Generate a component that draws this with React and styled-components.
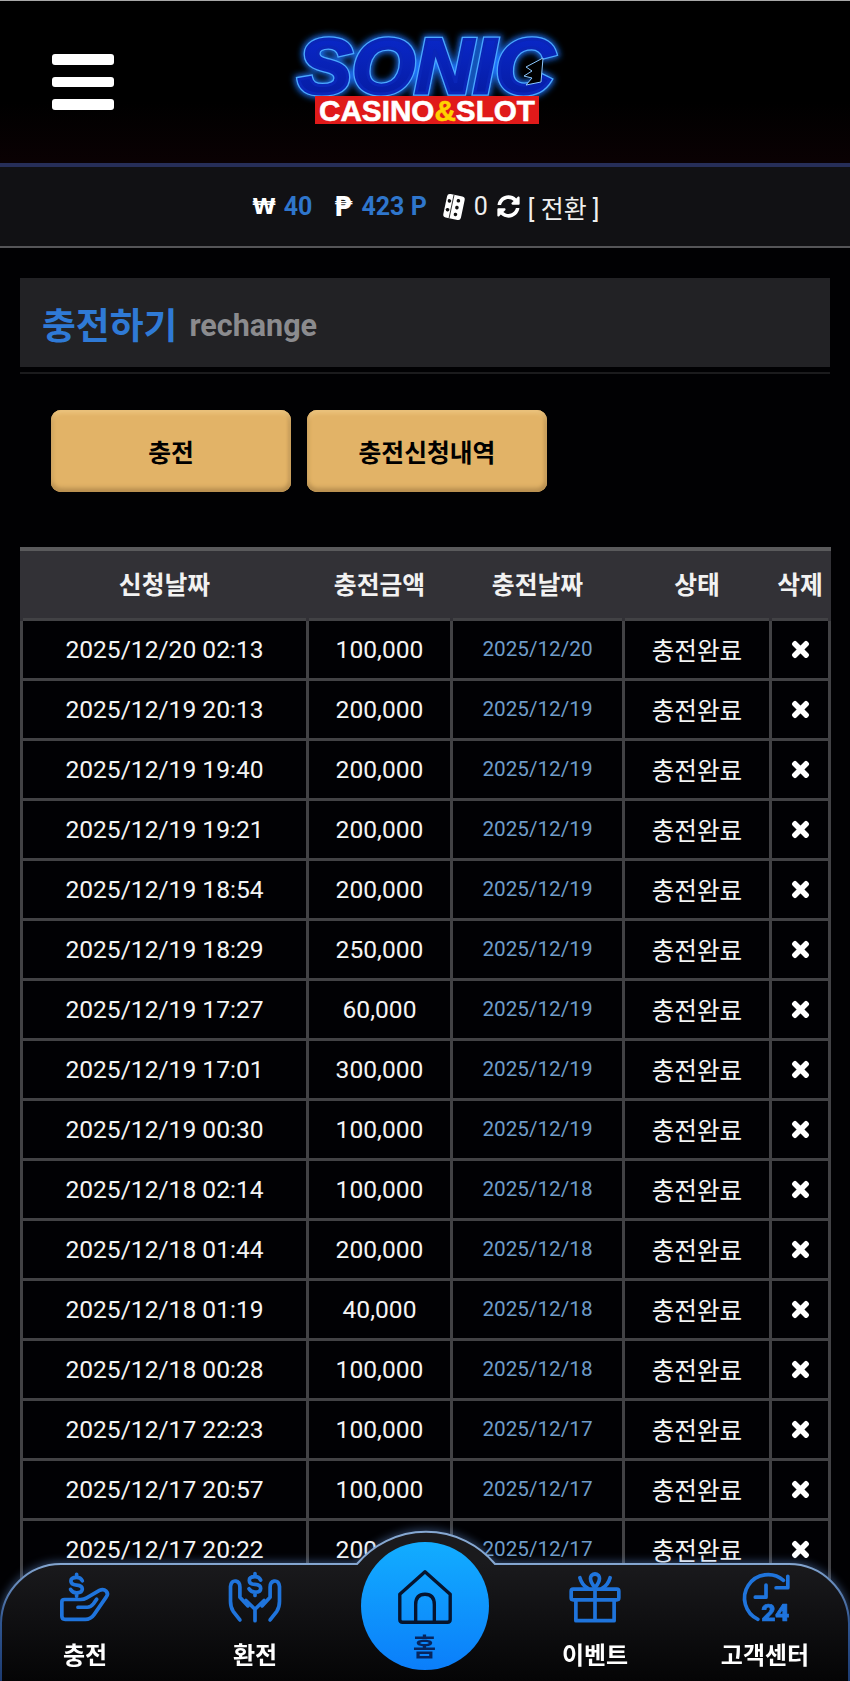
import React from "react";
import styled, { createGlobalStyle } from "styled-components";
import { FaSyncAlt, FaTimes } from "react-icons/fa";

const FONT = `Roboto, "Noto Sans CJK KR", sans-serif`;

const Global = createGlobalStyle`
  html, body { margin: 0; padding: 0; background: #000; overflow: hidden; height: 1681px; }
  body { font-family: ${FONT}; color: #fff; }
  * { box-sizing: border-box; }
`;

const Page = styled.div`
  width: 850px;
  height: 1681px;
  overflow: hidden;
  background: #010103;
`;

const Header = styled.header`
  height: 167px;
  border-top: 1px solid #a8a8a8;
  border-bottom: 4px solid #262e58;
  background: linear-gradient(#000 62%, #0a0103);
  display: grid;
  grid-template-columns: 1fr auto 1fr;
  padding-top: 24px;
`;

const Burger = styled.button`
  all: unset;
  align-self: start;
  margin: 29px 0 0 52px;
  width: 62px;
  display: flex;
  flex-direction: column;
  gap: 12px;
`;

const BurgerBar = styled.span`
  display: block;
  height: 10.5px;
  border-radius: 3px;
  background: #fff;
`;

const LogoSvg = styled.svg`
  display: block;
  width: 284px;
  height: 105px;
  margin-left: 4px;
  overflow: visible;
`;

const Balance = styled.div`
  height: 81px;
  background: #111114;
  border-bottom: 2px solid #555558;
  display: flex;
  align-items: center;
  justify-content: center;
  font-size: 25px;
  padding-left: 2px;
`;

const Sym = styled.span`
  font-family: "DejaVu Sans", sans-serif;
  font-weight: 700;
  font-size: ${(p) => p.$size || 24}px;
  color: #fff;
  margin-right: ${(p) => p.$gap || 9}px;
`;

const Amount = styled.span`
  font-weight: 700;
  color: #2f76cc;
  margin-right: ${(p) => p.$gap || 22}px;
`;

const Plain = styled.span`
  color: #eee;
  margin-right: ${(p) => p.$gap || 0}px;
`;

const Dice = styled.svg`
  width: 24px;
  height: 28px;
  margin-right: 8px;
`;

const Refresh = styled(FaSyncAlt)`
  width: 23px;
  height: 23px;
  margin: 0 8px 0 9px;
  color: #fff;
`;

const Main = styled.main`
  padding: 30px 20px 0;
`;

const TitleWrap = styled.div`
  padding-bottom: 5px;
  border-bottom: 2px solid #1b1b1d;
`;

const Title = styled.div`
  height: 89px;
  background: #222225;
  display: flex;
  align-items: center;
  gap: 12px;
  padding-left: 22px;
`;

const TitleKo = styled.h1`
  margin: 0;
  font-size: 36.8px;
  font-weight: 700;
  color: #2f7ad6;
`;

const TitleEn = styled.span`
  font-size: 30.5px;
  font-weight: 700;
  color: #8b8b8e;
  margin-top: 5px;
`;

const Tabs = styled.div`
  display: flex;
  gap: 16px;
  padding: 36px 0 55px 31px;
`;

const Tab = styled.button`
  width: 240px;
  height: 82px;
  border: 0;
  border-radius: 10px;
  background: #e2b367;
  box-shadow: inset 0 -4px 4px #b88f50, inset 0 3px 4px #edc680, inset 3px 0 3px #d9ab62, inset -3px 0 3px #c59a58;
  color: #000;
  font-family: ${FONT};
  font-size: 24.8px;
  font-weight: 700;
`;

const Table = styled.table`
  width: 808px;
  border-collapse: collapse;
  table-layout: fixed;
`;

const Th = styled.th`
  height: 70px;
  width: ${(p) => p.$w}px;
  padding: 0 0 2px;
  background: #323136;
  border-top: 4px solid #5a5a5c;
  border-left: 3px solid #323136;
  border-right: 3px solid #323136;
  font-size: 24.8px;
  font-weight: 700;
  color: #f2f2f2;
  white-space: nowrap;
`;

const Td = styled.td`
  height: 60px;
  padding: 0;
  text-align: center;
  border: 3px solid #424245;
  background: #010104;
  font-size: ${(p) => (p.$accent ? 20.7 : 24.6)}px;
  color: ${(p) => (p.$accent ? "#6e9cc9" : "#f4f4f4")};
  white-space: nowrap;
`;

const DeleteIcon = styled(FaTimes)`
  width: 19px;
  height: 23px;
  color: #fff;
  display: block;
  margin: 0 auto;
  stroke: #fff;
  stroke-width: 28;
`;

const Nav = styled.nav`
  position: fixed;
  left: 0;
  bottom: 0;
  width: 850px;
  height: 150px;
  display: grid;
  grid-template-columns: repeat(5, 170px);
  align-items: start;
`;

const NavShape = styled.svg`
  position: absolute;
  inset: 0;
  width: 850px;
  height: 150px;
  overflow: visible;
  filter: drop-shadow(0 -1px 5px rgba(110, 160, 230, 0.45));
`;

const NavItem = styled.a`
  position: relative;
  display: flex;
  flex-direction: column;
  align-items: center;
  padding-top: 40px;
  font-size: 24px;
  font-weight: 700;
  color: #fff;
`;

const NavIcon = styled.svg`
  display: block;
  width: 54px;
  height: 52px;
  margin-bottom: 15px;
  fill: none;
  stroke: #1f74dc;
  stroke-width: 11;
  stroke-linecap: round;
  stroke-linejoin: round;
`;

const NavLabel = styled.span`
  line-height: 36px;
  white-space: nowrap;
`;

const HomeButton = styled.a`
  position: relative;
  justify-self: center;
  margin: 11px 0 0 -1px;
  width: 128px;
  height: 128px;
  border-radius: 50%;
  background: linear-gradient(#12adff, #0b7efa);
  display: flex;
  flex-direction: column;
  align-items: center;
  padding-top: 27px;
  color: #07255e;
  font-size: 25px;
  font-weight: 700;
`;

const HomeIcon = styled.svg`
  display: block;
  width: 56px;
  height: 56px;
  fill: none;
  stroke: #06142e;
  stroke-width: 3.6;
  stroke-linejoin: round;
  stroke-linecap: round;
`;

const HomeLabel = styled.span`
  line-height: 30px;
  margin-top: 8px;
`;

const dates = [
  ["2025/12/20 02:13", "100,000", "2025/12/20"],
  ["2025/12/19 20:13", "200,000", "2025/12/19"],
  ["2025/12/19 19:40", "200,000", "2025/12/19"],
  ["2025/12/19 19:21", "200,000", "2025/12/19"],
  ["2025/12/19 18:54", "200,000", "2025/12/19"],
  ["2025/12/19 18:29", "250,000", "2025/12/19"],
  ["2025/12/19 17:27", "60,000", "2025/12/19"],
  ["2025/12/19 17:01", "300,000", "2025/12/19"],
  ["2025/12/19 00:30", "100,000", "2025/12/19"],
  ["2025/12/18 02:14", "100,000", "2025/12/18"],
  ["2025/12/18 01:44", "200,000", "2025/12/18"],
  ["2025/12/18 01:19", "40,000", "2025/12/18"],
  ["2025/12/18 00:28", "100,000", "2025/12/18"],
  ["2025/12/17 22:23", "100,000", "2025/12/17"],
  ["2025/12/17 20:57", "100,000", "2025/12/17"],
  ["2025/12/17 20:22", "200,000", "2025/12/17"],
];

const sonicText = {
  x: 13,
  y: 68,
  fontFamily: "Liberation Sans",
  fontWeight: 700,
  fontStyle: "italic",
  fontSize: 78,
  textLength: 256,
  lengthAdjust: "spacingAndGlyphs",
};

const Logo = () => (
  <LogoSvg viewBox="0 0 284 105">
    <defs>
      <filter id="glow" x="-10%" y="-20%" width="120%" height="140%">
        <feGaussianBlur stdDeviation="3" />
      </filter>
      <linearGradient id="blueFill" x1="0" y1="0" x2="0" y2="1">
        <stop offset="0" stopColor="#0a2ad0" />
        <stop offset="1" stopColor="#051a9c" />
      </linearGradient>
    </defs>
    <text {...sonicText} fill="none" stroke="#1a74ff" strokeWidth="8" filter="url(#glow)">SONIC</text>
    <text {...sonicText} fill="none" stroke="#4aa8ff" strokeWidth="5.5">SONIC</text>
    <text {...sonicText} fill="url(#blueFill)" stroke="#0a26b8" strokeWidth="3">SONIC</text>
    <path d="M258 33 L241 42 L247 46 L239 51 L247 53 L241 60 L256 57 Z" fill="#000" stroke="#8cc8ff" strokeWidth="1" />
    <rect x="30" y="71" width="224" height="28" fill="#e01a1a" />
    <text x="34" y="96" fontFamily="Liberation Sans Narrow, Liberation Sans" fontWeight="700" fontSize="30" textLength="216" lengthAdjust="spacingAndGlyphs" fill="#fff" stroke="#fff" strokeWidth="0.6">CASINO<tspan fill="#ffd200" stroke="#ffd200">&amp;</tspan>SLOT</text>
  </LogoSvg>
);

const Dollar = ({ x, y }) => (
  <path
    transform={`translate(${x} ${y})`}
    d="M17 -13 Q12 -23 0 -23 Q-17 -23 -17 -12 Q-17 -1 0 0 Q17 1 17 12 Q17 23 0 23 Q-12 23 -18 13 M0 -32 V-23 M0 23 V33"
  />
);

const items = {
  charge: (
    <NavIcon viewBox="25 20 160 155">
      <Dollar x={80} y={62} />
      <path d="M36 112 Q36 105 44 105 H92 Q102 105 110 100 L148 78 Q160 72 168 80 Q176 88 168 98 L132 150 Q122 164 106 164 H46 Q36 164 36 154 Z" />
      <path d="M84 128 H112 Q122 128 130 118 L140 104" />
    </NavIcon>
  ),
  exchange: (
    <NavIcon viewBox="537 20 160 155">
      <Dollar x={617} y={60} />
      <path d="M572 166 L552 140 Q544 128 544 110 V66 Q546 48 560 50 Q572 52 572 68 V98 L596 124" />
      <path d="M662 166 L682 140 Q690 128 690 110 V66 Q688 48 674 50 Q662 52 662 68 V98 L638 124" />
      <path d="M617 168 V134 L590 108 M617 134 L644 108" />
    </NavIcon>
  ),
  gift: (
    <NavIcon viewBox="25 20 160 155">
      <rect x="34" y="74" width="142" height="32" rx="6" />
      <path d="M48 106 V168 H162 V106 M105 74 V168" />
      <path d="M105 70 Q86 46 94 34 Q105 24 116 34 Q124 46 105 70 M60 40 Q66 62 84 72 M150 40 Q144 62 126 72" />
    </NavIcon>
  ),
  support: (
    <NavIcon viewBox="537 20 160 155">
      <path d="M672 48 A70 70 0 1 0 596 164" />
      <path d="M685 36 V70 H650" />
      <path d="M620 62 V98 H588" />
      <text x="606" y="170" fontFamily="Roboto" fontWeight="900" fontSize="74" fill="#1f74dc" stroke="#1f74dc" strokeWidth="2" letterSpacing="-2">24</text>
    </NavIcon>
  ),
};

export default function App() {
  return (
    <Page>
      <Global />
      <Header>
        <Burger aria-label="menu">
          <BurgerBar />
          <BurgerBar />
          <BurgerBar />
        </Burger>
        <Logo />
        <span />
      </Header>
      <Balance>
        <Sym $size={21} $gap={8}>₩</Sym>
        <Amount>40</Amount>
        <Sym $size={26}>₱</Sym>
        <Amount $gap={15}>423 P</Amount>
        <Dice viewBox="0 0 24 28">
          <g transform="rotate(12 12 14)">
            <rect x="3" y="2" width="18" height="24" rx="3" fill="#fff" />
            <path d="M9.5 2 V26" stroke="#111" strokeWidth="0.8" />
            <circle cx="6.3" cy="9" r="1.8" fill="#111" />
            <circle cx="6.3" cy="18" r="1.8" fill="#111" />
            <circle cx="15" cy="7" r="1.8" fill="#111" />
            <circle cx="15" cy="14" r="1.8" fill="#111" />
            <circle cx="15" cy="21" r="1.8" fill="#111" />
          </g>
        </Dice>
        <Plain>0</Plain>
        <Refresh />
        <Plain>[ 전환 ]</Plain>
      </Balance>
      <Main>
        <TitleWrap>
          <Title>
            <TitleKo>충전하기</TitleKo>
            <TitleEn>rechange</TitleEn>
          </Title>
        </TitleWrap>
        <Tabs>
          <Tab>충전</Tab>
          <Tab>충전신청내역</Tab>
        </Tabs>
        <Table>
          <thead>
            <tr>
              <Th $w={286}>신청날짜</Th>
              <Th $w={144}>충전금액</Th>
              <Th $w={172}>충전날짜</Th>
              <Th $w={147}>상태</Th>
              <Th $w={59}>삭제</Th>
            </tr>
          </thead>
          <tbody>
            {dates.map(([a, b, c]) => (
              <tr key={a}>
                <Td>{a}</Td>
                <Td>{b}</Td>
                <Td $accent>{c}</Td>
                <Td>충전완료</Td>
                <Td>
                  <DeleteIcon />
                </Td>
              </tr>
            ))}
          </tbody>
        </Table>
      </Main>
      <Nav>
        <NavShape viewBox="0 0 850 150">
          <defs>
            <linearGradient id="navFill" x1="0" y1="0" x2="0" y2="1">
              <stop offset="0.2" stopColor="#1a1a1d" />
              <stop offset="1" stopColor="#040405" />
            </linearGradient>
            <linearGradient id="navStroke" x1="0" y1="0" x2="0" y2="1">
              <stop offset="0.2" stopColor="#86a8d2" />
              <stop offset="0.6" stopColor="#2f5590" />
              <stop offset="1" stopColor="#1c3a70" />
            </linearGradient>
          </defs>
          <path
            d="M1 152 V92 A60 60 0 0 1 61 33 H357 A90 90 0 0 1 495 33 H789 A60 60 0 0 1 849 92 V152 Z"
            fill="url(#navFill)"
            stroke="url(#navStroke)"
            strokeWidth="2"
          />
        </NavShape>
        <NavItem>
          {items.charge}
          <NavLabel>충전</NavLabel>
        </NavItem>
        <NavItem>
          {items.exchange}
          <NavLabel>환전</NavLabel>
        </NavItem>
        <HomeButton>
          <HomeIcon viewBox="0 0 60 60">
            <path d="M30 3 L3 27 V54 Q3 57 6 57 H54 Q57 57 57 54 V27 Z" />
            <path d="M20 57 V38 Q20 27 30 27 Q40 27 40 38 V57" />
          </HomeIcon>
          <HomeLabel>홈</HomeLabel>
        </HomeButton>
        <NavItem>
          {items.gift}
          <NavLabel>이벤트</NavLabel>
        </NavItem>
        <NavItem>
          {items.support}
          <NavLabel>고객센터</NavLabel>
        </NavItem>
      </Nav>
    </Page>
  );
}
